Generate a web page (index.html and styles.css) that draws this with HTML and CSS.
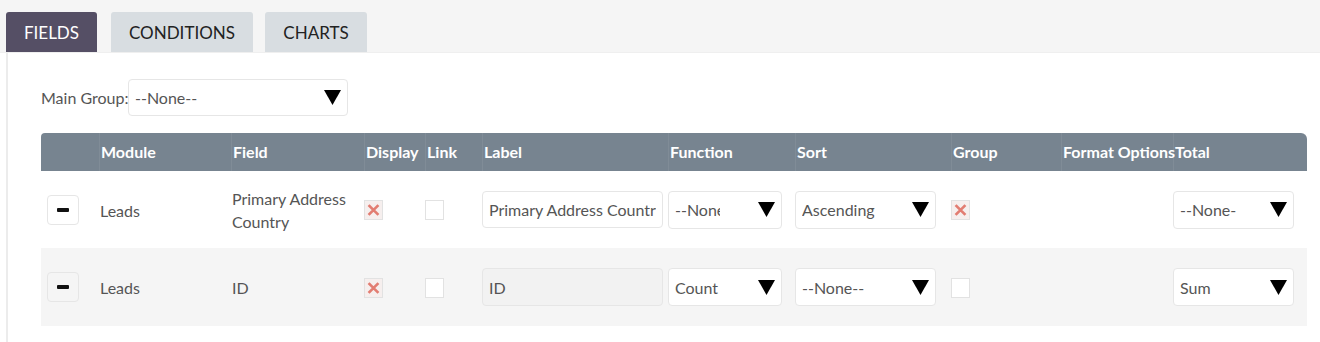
FILE: index.html
```html
<!DOCTYPE html>
<html>
<head>
<meta charset="utf-8">
<link rel="stylesheet" href="styles.css">
</head>
<body>
<div class="tabs">
  <div class="tab active">FIELDS</div>
  <div class="tab">CONDITIONS</div>
  <div class="tab tab-charts">CHARTS</div>
</div>
<div class="panel">
  <div class="main-group">
    <span class="mg-label">Main Group:</span>
    <div class="select select-main"><span class="val">--None--</span><svg class="arrow" viewBox="0 0 17 15"><polygon points="0,0 17,0 8.5,15" /></svg></div>
  </div>
  <table class="grid">
    <colgroup>
      <col style="width:58px"><col style="width:132px"><col style="width:133px"><col style="width:61px"><col style="width:57px"><col style="width:186px"><col style="width:127px"><col style="width:156px"><col style="width:110px"><col style="width:112px"><col style="width:134px">
    </colgroup>
    <thead>
      <tr>
        <th></th><th>Module</th><th>Field</th><th>Display</th><th>Link</th><th>Label</th><th>Function</th><th>Sort</th><th>Group</th><th>Format Options</th><th>Total</th>
      </tr>
    </thead>
    <tbody>
      <tr class="row">
        <td><div class="btn-minus"><span class="bar"></span></div></td>
        <td class="txt">Leads</td>
        <td class="txt field">Primary Address<br>Country</td>
        <td><span class="chk checked"><svg viewBox="0 0 19 19"><path d="M4 4 L15 15 M15 4 L4 15" /></svg></span></td>
        <td><span class="chk"></span></td>
        <td><div class="input"><span class="ival">Primary Address Country</span></div></td>
        <td><div class="select select-fn"><span class="val">--None--</span><svg class="arrow" viewBox="0 0 17 15"><polygon points="0,0 17,0 8.5,15" /></svg></div></td>
        <td><div class="select select-sort"><span class="val">Ascending</span><svg class="arrow" viewBox="0 0 17 15"><polygon points="0,0 17,0 8.5,15" /></svg></div></td>
        <td><span class="chk checked"><svg viewBox="0 0 19 19"><path d="M4 4 L15 15 M15 4 L4 15" /></svg></span></td>
        <td></td>
        <td><div class="select select-total"><span class="val">--None--</span><svg class="arrow" viewBox="0 0 17 15"><polygon points="0,0 17,0 8.5,15" /></svg></div></td>
      </tr>
      <tr class="row alt">
        <td><div class="btn-minus"><span class="bar"></span></div></td>
        <td class="txt">Leads</td>
        <td class="txt field">ID</td>
        <td><span class="chk checked"><svg viewBox="0 0 19 19"><path d="M4 4 L15 15 M15 4 L4 15" /></svg></span></td>
        <td><span class="chk"></span></td>
        <td><div class="input readonly"><span class="ival">ID</span></div></td>
        <td><div class="select select-fn"><span class="val">Count</span><svg class="arrow" viewBox="0 0 17 15"><polygon points="0,0 17,0 8.5,15" /></svg></div></td>
        <td><div class="select select-sort"><span class="val">--None--</span><svg class="arrow" viewBox="0 0 17 15"><polygon points="0,0 17,0 8.5,15" /></svg></div></td>
        <td><span class="chk"></span></td>
        <td></td>
        <td><div class="select select-total"><span class="val">Sum</span><svg class="arrow" viewBox="0 0 17 15"><polygon points="0,0 17,0 8.5,15" /></svg></div></td>
      </tr>
    </tbody>
  </table>
</div>
</body>
</html>
```
FILE: styles.css
```css
* { box-sizing: border-box; }
html, body { margin: 0; padding: 0; }
body {
  font-family: Lato, "Open Sans", "Liberation Sans", sans-serif;
  background: #ffffff;
  color: #555555;
  width: 1320px;
  height: 342px;
  overflow: hidden;
}
.tabs {
  background: #f5f5f5;
  height: 53px;
  padding: 13px 0 0 6px;
  display: flex;
  align-items: flex-end;
  border-bottom: 1px solid #efefef;
}
.tab {
  height: 40px;
  display: flex;
  align-items: center;
  justify-content: center;
  background: #d8dde1;
  color: #222222;
  font-size: 17px;
  border-radius: 3px 3px 0 0;
  width: 142px;
  margin-right: 12px;
}
.tab.active {
  background: #554f65;
  color: #ffffff;
  width: 91px;
  margin-right: 14px;
}
.tab-charts { width: 102px; }

.panel {
  margin-left: 6px;
  border-left: 2px solid #ececec;
  padding: 26px 0 0 33px;
  height: 289px;
}
.main-group {
  display: flex;
  align-items: center;
  height: 37px;
}
.mg-label {
  font-size: 16px;
  color: #555555;
  width: 87px;
  white-space: nowrap;
}
.select {
  display: flex;
  align-items: center;
  background: #ffffff;
  border: 1px solid #e6e6e6;
  border-radius: 4px;
  height: 38px;
  padding: 0 6px 0 6px;
  font-size: 16px;
  color: #555555;
}
.select .val {
  flex: 1;
  min-width: 0;
  overflow: hidden;
  white-space: nowrap;
  margin-right: 38px;
}
.select .arrow {
  width: 17px;
  height: 15px;
  flex: none;
  fill: #000000;
}
.select-main { width: 220px; height: 37px; }
.select-main .val { margin-right: 8px; }
.select-fn { width: 114px; }
.select-sort { width: 141px; }
.select-sort .val { margin-right: 8px; }
.select-total { width: 121px; }
.select-total .val { margin-right: 34px; }

.grid {
  margin-top: 17px;
  width: 1266px;
  border-collapse: separate;
  border-spacing: 0;
  table-layout: fixed;
}
.grid th {
  background: #778490;
  color: #ffffff;
  font-weight: 700;
  font-size: 16px;
  text-align: left;
  height: 38px;
  padding: 0 0 1px 1px;
  border-left: 1px solid #808c97;
  white-space: nowrap;
  overflow: visible;
}
.grid th:first-child { border-left: none; border-top-left-radius: 4px; }
.grid th:last-child { border-top-right-radius: 6px; }
.grid td {
  padding: 0;
  font-size: 16px;
  color: #555555;
  vertical-align: middle;
}
.grid td.txt { padding-left: 1px; padding-top: 1px; }
.row td { height: 77px; }
.row.alt td { background: #f5f5f5; height: 78px; }
.field { line-height: 23px; }

.btn-minus {
  width: 32px;
  height: 30px;
  margin-left: 6px;
  border: 1px solid #e6e6e6;
  border-radius: 4px;
  background: #ffffff;
  display: flex;
  align-items: center;
  justify-content: center;
}
.alt .btn-minus { background: #f5f5f5; }
.bar {
  width: 12px;
  height: 4px;
  background: #111111;
  border-radius: 1px;
}
.chk {
  display: block;
  width: 19px;
  height: 20px;
  border: 1px solid #e2e2e2;
  background: #ffffff;
  margin: 1px 0 0 0;
}
.chk.checked { background: #f6efee; }
.chk svg { display: block; width: 17px; height: 18px; }
.chk svg path {
  stroke: #e27d72;
  stroke-width: 3;
  fill: none;
}
.input {
  width: 181px;
  height: 37px;
  border: 1px solid #e6e6e6;
  border-radius: 4px;
  background: #ffffff;
  padding: 0 6px;
  display: flex;
  align-items: center;
  font-size: 16px;
  color: #555555;
}
.ival {
  flex: 1;
  min-width: 0;
  overflow: hidden;
  white-space: nowrap;
}
.input.readonly { background: #f2f2f2; height: 38px; }
```
